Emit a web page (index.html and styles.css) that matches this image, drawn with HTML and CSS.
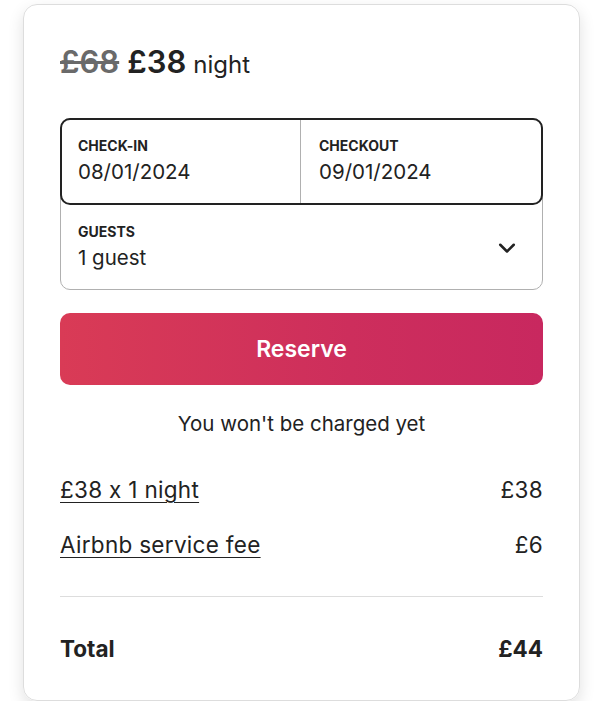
FILE: index.html
```html
<!DOCTYPE html>
<html lang="en">
<head>
    <meta charset="UTF-8">
    <meta name="viewport" content="width=device-width, initial-scale=1.0">
    <title>Reserve</title>
    <link rel="stylesheet" href="styles.css">
</head>
<body>

    <div class="booking-card">
        <div class="price-line">
            <span class="old-price">£68</span>
            <span class="new-price">£38</span>
            <span class="per">night</span>
        </div>

        <!-- dates + guests -->
        <div class="picker">
            <div class="dates">
                <div class="field">
                    <div class="label">CHECK-IN</div>
                    <div class="value">08/01/2024</div>
                </div>
                <div class="field field-right">
                    <div class="label">CHECKOUT</div>
                    <div class="value">09/01/2024</div>
                </div>
            </div>
            <div class="guests">
                <div>
                    <div class="label">GUESTS</div>
                    <div class="value">1 guest</div>
                </div>
                <svg class="chevron" width="18" height="18" viewBox="0 0 32 32">
                    <path d="M28 12 16 24 4 12" fill="none" stroke="#222" stroke-width="4.5" stroke-linecap="round" stroke-linejoin="round"/>
                </svg>
            </div>
        </div>

        <button class="reserve">Reserve</button>
        <p class="note">You won't be charged yet</p>

        <div class="line-item">
            <a href="#">£38 x 1 night</a>
            <span>£38</span>
        </div>
        <div class="line-item">
            <a href="#">Airbnb service fee</a>
            <span>£6</span>
        </div>

        <div class="total">
            <span>Total</span>
            <span>£44</span>
        </div>
    </div>

</body>
</html>
```

FILE: styles.css
```css
body {
    font-family: 'Inter', 'Open Sans', sans-serif;
    font-feature-settings: "calt" 0;
    background-color: #fff;
    color: #222;
    margin: 0;
    padding: 4px 20px 0 23px;
}
.booking-card {
    width: 483px;
    border: 1px solid #dddddd;
    border-radius: 14px;
    padding: 37px 36px 37px 36px;
    box-shadow: 0 6px 16px rgba(0, 0, 0, 0.12);
}
.price-line {
    display: flex;
    align-items: baseline;
    gap: 8px;
    line-height: 40px;
}
.old-price {
    font-size: 31px;
    font-weight: 600;
    color: #6a6a6a;
    text-decoration: line-through;
}
.new-price {
    font-size: 31px;
    font-weight: 600;
}
.per {
    font-size: 24px;
    margin-left: -1px;
}
.picker {
    margin-top: 33px;
    border: 1px solid #b0b0b0;
    border-radius: 10px;
}
.dates {
    display: flex;
    border: 2px solid #222;
    border-radius: 10px;
    margin: -1px -1px 0 -1px;
}
.field {
    flex: 1;
    padding: 17px 16px 0 16px;
    height: 66px;
}
.field-right {
    border-left: 1px solid #b0b0b0;
    padding-left: 18px;
}
.label {
    font-size: 14px;
    line-height: 17px;
    font-weight: 700;
}
.value {
    font-size: 20.5px;
    line-height: 25px;
    margin-top: 5px;
}
.guests {
    display: flex;
    justify-content: space-between;
    align-items: center;
    padding: 18px 26px 19px 17px;
}
.reserve {
    display: block;
    width: 100%;
    margin-top: 23px;
    height: 72px;
    border: none;
    border-radius: 10px;
    background: linear-gradient(to right, #d93b56, #cd2e5c 60%, #c8285f);
    color: white;
    font-family: 'Inter', 'Open Sans', sans-serif;
    font-size: 23px;
    font-weight: 600;
    cursor: pointer;
}
.note {
    text-align: center;
    font-size: 20.5px;
    line-height: 24px;
    margin: 27px 0 40px 0;
}
.line-item {
    display: flex;
    justify-content: space-between;
    font-size: 22.5px;
    line-height: 28px;
    letter-spacing: 0.3px;
    margin-bottom: 27px;
}
.line-item a {
    color: #222;
    text-decoration: underline;
    text-underline-offset: 4px;
    text-decoration-thickness: 1px;
}
.total {
    display: flex;
    justify-content: space-between;
    border-top: 1px solid #dddddd;
    margin-top: 37px;
    padding-top: 38px;
    font-size: 22.5px;
    line-height: 28px;
    font-weight: 700;
}
```
